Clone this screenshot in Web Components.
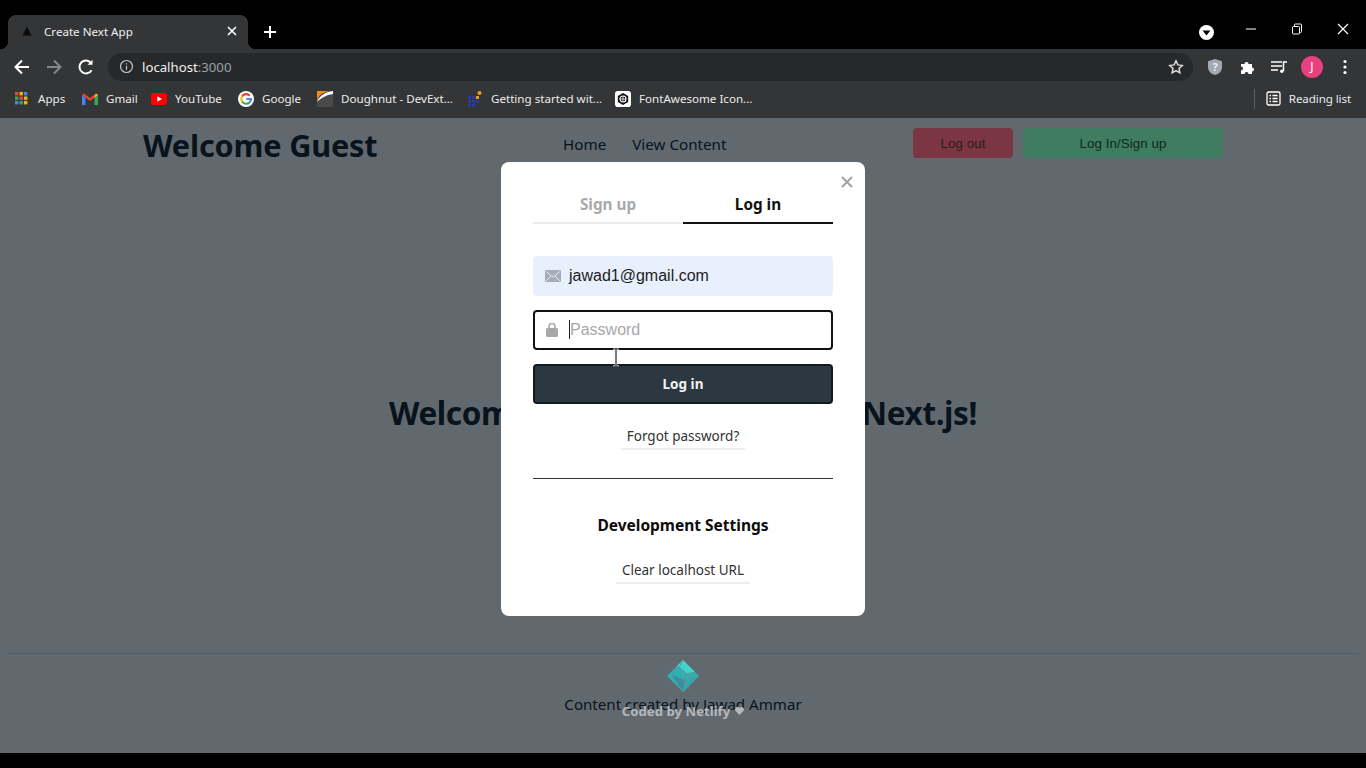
<!DOCTYPE html>
<html lang="en">
<head>
<meta charset="utf-8">
<title>Create Next App</title>
<style>
    html, body { margin: 0; height: 100%; background: #000; overflow: hidden; }
    body { display: flex; flex-direction: column; height: 768px; font-family: "Noto Sans", "Open Sans", sans-serif; }
</style>
</head>
<body>
<browser-frame></browser-frame>
<bookmark-bar></bookmark-bar>
<app-page></app-page>
<login-modal></login-modal>

<template id="frame-template">
    <style>
        :host { display: block; color: #fff; }
        .strip { height: 49px; background: #000; display: flex; align-items: flex-end; padding-left: 8px; box-sizing: border-box; }
        .tab { width: 240px; height: 34px; background: #343536; border-radius: 8px 8px 0 0; display: flex; align-items: center; box-sizing: border-box; padding: 0 10px 2px 13px; position: relative; font-size: 11.6px; }
        .tab::after { content: ""; position: absolute; right: -8px; bottom: 0; width: 8px; height: 8px; background: radial-gradient(circle at 100% 0, transparent 8px, #343536 8.5px); }
        .tab::before { content: ""; position: absolute; left: -8px; bottom: 0; width: 8px; height: 8px; background: radial-gradient(circle at 0 0, transparent 8px, #343536 8.5px); }
        .tab span { flex: 1; padding-left: 11px; color: #f1f1f1; }
        .plus { margin: 0 0 7px 12px; display: block; flex: none; }
        .spacer { flex: 1; }
        .controls { display: flex; align-items: flex-start; height: 49px; }
        .controls svg { display: block; }
        .media { margin: 25px 14px 0 0; }
        .win { width: 46px; display: flex; justify-content: center; margin-top: 23px; }
        .win.close { margin-top: 22px; }
        .toolbar { height: 33px; background: #343536; display: flex; align-items: center; box-sizing: border-box; padding: 2px 0 0 12px; }
        .nav { display: flex; align-items: center; gap: 12px; width: 96px; }
        .omni { width: 1085px; height: 28px; border-radius: 14px; background: #27282a; display: flex; align-items: center; box-sizing: border-box; padding: 0 9px 0 11px; font-size: 13.2px; }
        .url { flex: 1; padding-left: 8px; color: #f1f1f1; }
        .url i { font-style: normal; color: #9aa0a6; }
        .tools { display: flex; align-items: center; width: 173px; }
        .tools > * { flex: none; }
        .avatar { width: 22px; height: 22px; border-radius: 50%; background: #e9407f; font-size: 12px; display: flex; align-items: center; justify-content: center; color: #fff; }
    </style>
    <div class="strip">
        <div class="tab">
            <svg width="12" height="12" viewBox="0 0 12 12"><path d="M6 1.500 10.500 10.500H1.500z" fill="#0c0c0c"/></svg>
            <span>Create Next App</span>
            <svg width="12" height="12" viewBox="0 0 12 12"><path d="M2 2l8 8M10 2l-8 8" stroke="#fff" stroke-width="1.6"/></svg>
        </div>
        <svg class="plus" width="20" height="20" viewBox="0 0 20 20"><path d="M10 4v12M4 10h12" stroke="#fff" stroke-width="2"/></svg>
        <div class="spacer"></div>
        <div class="controls">
            <svg class="media" width="15" height="15" viewBox="0 0 15 15"><circle cx="7.5" cy="7.5" r="7.5" fill="#fff"/><path d="M3.6 5.6h7.8L7.5 10.6z" fill="#000"/></svg>
            <div class="win"><svg width="12" height="12" viewBox="0 0 12 12"><path d="M1 6h10" stroke="#fff" stroke-width="1"/></svg></div>
            <div class="win"><svg width="12" height="12" viewBox="0 0 12 12" fill="none" stroke="#fff"><rect x="1.5" y="3.5" width="7" height="7.5" rx="1"/><path d="M3.5 3.5V2a1 1 0 0 1 1-1h5a1 1 0 0 1 1 1v6.5a1 1 0 0 1-1 1H8.5"/></svg></div>
            <div class="win close"><svg width="14" height="14" viewBox="0 0 14 14"><path d="M2 2l10 10M12 2 2 12" stroke="#fff" stroke-width="1.2"/></svg></div>
        </div>
    </div>
    <div class="toolbar">
        <div class="nav">
            <svg width="20" height="20" viewBox="0 0 20 20" fill="none" stroke="#fff" stroke-width="2"><path d="M17 10H4M10 3.5 3.5 10l6.5 6.5"/></svg>
            <svg width="20" height="20" viewBox="0 0 20 20" fill="none" stroke="#85878a" stroke-width="2"><path d="M3 10h13M10 3.5l6.5 6.5-6.5 6.5"/></svg>
            <svg width="20" height="20" viewBox="0 0 20 20" fill="none" stroke="#fff" stroke-width="2"><path d="M15.6 13.2A6.5 6.5 0 1 1 15.2 6"/><path d="M16.5 2.8v5h-5z" fill="#fff" stroke="none"/></svg>
        </div>
        <div class="omni">
            <svg width="15" height="15" viewBox="0 0 15 15" fill="none" stroke="#c4c6c9" stroke-width="1.2"><circle cx="7.5" cy="7.5" r="6"/><path d="M7.5 6.8v4M7.5 4.2v1.4"/></svg>
            <div class="url">localhost<i>:3000</i></div>
            <svg width="16" height="16" viewBox="0 0 16 16" fill="none" stroke="#e4e4e4" stroke-width="1.4"><path d="M8 1.8l1.9 4.1 4.4.5-3.3 3 .9 4.4L8 11.6l-3.900 2.2.9-4.4-3.300-3 4.400-.5z"/></svg>
        </div>
        <div class="tools">
            <svg style="margin-left:14px" width="16" height="18" viewBox="0 0 16 18"><path d="M8 1l7 2.200v6C15 13 12 16 8 17 4 16 1 13 1 9.200v-6z" fill="#a4a8b2"/><text x="8" y="13" text-anchor="middle" font-size="11" font-weight="700" font-family="Noto Sans" fill="#eee">?</text></svg>
            <svg style="margin-left:17px" width="16" height="16" viewBox="0 0 16 16"><path d="M1 5h3.500a2 2 0 1 1 4 0H12v3.500a2 2 0 1 1 0 4V15H8.500a2 2 0 1 0-4 0H1v-3.500a2 2 0 1 0 0-4z" fill="#fff"/></svg>
            <svg style="margin-left:14px" width="18" height="16" viewBox="0 0 18 16" fill="none" stroke="#fff" stroke-width="1.500"><path d="M1 3h11M1 7h11M1 11h7"/><path d="M13.500 12V3h3.500"/><circle cx="11.800" cy="12.300" r="1.700" fill="#fff" stroke="none"/></svg>
            <div class="avatar" style="margin-left:13px">J</div>
            <svg style="margin-left:20px" width="4" height="16" viewBox="0 0 4 16" fill="#fff"><circle cx="2" cy="2.500" r="1.600"/><circle cx="2" cy="8" r="1.600"/><circle cx="2" cy="13.500" r="1.600"/></svg>
        </div>
    </div>
</template>

<template id="bookmarks-template">
    <style>
        :host { display: flex; align-items: center; height: 36px; background: #343536; color: #ececec; font-size: 11.6px; box-sizing: border-box; padding: 0 15px 3px 14px; }
        .left { display: flex; align-items: center; flex: 1; }
        .reading { display: flex; align-items: center; gap: 8px; border-left: 1px solid #5f6063; height: 20px; padding-left: 11px; letter-spacing: -.1px; }
        svg { display: block; }
    </style>
    <div class="left"><slot></slot></div>
    <div class="reading">
        <svg width="15" height="15" viewBox="0 0 15 15" fill="none" stroke="#fff" stroke-width="1.300"><rect x="1" y="1" width="13" height="13" rx="1.500"/><path d="M3.500 4.500h1.500M6.500 4.500h5M3.500 7.500h1.500M6.500 7.500h5M3.500 10.500h1.500M6.500 10.500h5"/></svg>
        <span>Reading list</span>
    </div>
</template>

<template id="bookmark-template">
    <style>
        :host { display: flex; align-items: center; gap: 8px; white-space: nowrap; }
        ::slotted(svg) { display: block; flex: none; }
    </style>
    <slot name="icon"></slot><span></span>
</template>

<template id="page-template">
    <style>
        :host { display: flex; flex-direction: column; height: 635px; flex: none; background: #61696f; color: #08131b; font-family: "Noto Sans", "Open Sans", sans-serif; }
        header { width: 1080px; margin: 0 auto; display: flex; height: 60px; box-sizing: border-box; padding-top: 9px; align-items: flex-start; }
        h1 { margin: 0; width: 420px; font-size: 30.7px; line-height: 36px; font-weight: 700; letter-spacing: -.2px; }
        nav { display: flex; gap: 26px; width: 350px; font-size: 15.2px; line-height: 32px; padding-top: 1px; }
        .buttons { display: flex; gap: 10px; font-family: "Liberation Sans", sans-serif; font-size: 13.300px; padding-top: 1px; }
        .btn { height: 30px; border-radius: 4px; display: flex; align-items: center; justify-content: center; box-sizing: border-box; padding-top: 1px; letter-spacing: .1px; }
        .out { width: 100px; background: #7b3643; color: #2d1a20; }
        .in { width: 200px; background: #3f7c60; color: #0c2a20; }
        main { flex: 1; display: flex; justify-content: center; align-items: center; padding-bottom: 6px; }
        h2 { margin: 0; width: 588px; display: flex; justify-content: space-between; font-size: 31.5px; line-height: 44px; font-weight: 700; letter-spacing: -.4px; }
        footer { height: 100px; box-sizing: border-box; border-top: 1px solid #565e65; margin: 0 8px; display: flex; flex-direction: column; align-items: center; position: relative; font-size: 15.100px; }
        .logo { margin-top: 6px; display: block; }
        .credit { margin-top: 1px; line-height: 22px; }
        .coded { position: absolute; top: 48px; left: 0; right: 0; display: flex; justify-content: center; align-items: center; gap: 5px; font-size: 13.200px; font-weight: 700; color: #b3b8bb; line-height: 18px; }
    </style>
    <header>
        <h1>Welcome Guest</h1>
        <nav><span>Home</span><span>View Content</span></nav>
        <div class="buttons"><div class="btn out">Log out</div><div class="btn in">Log In/Sign up</div></div>
    </header>
    <main><h2><span>Welcome</span><span>Next.js!</span></h2></main>
    <footer>
        <svg class="logo" width="32" height="32" viewBox="0 0 32 32">
            <path d="M16 0 32 16 16 32 0 16z" fill="#2fb0b3"/>
            <path d="M16 0 28 12 20 14 12 7 10 6z" fill="#43d3cb"/>
            <path d="M5 15 16 32 18 20z" fill="#3e8b9e"/>
            <path d="M16 32 32 16 24 18z" fill="#35a3ac"/>
            <path d="M12 7l8 7-2 6M5 15l13 5 6-2 6-2M12 7 5 15M20 14l8-2M18 20l-2 12M18 20l4 9M12 7l4-7M9 23l9-3M20 14l4 4" stroke="#5f8f99" stroke-width=".8" fill="none"/>
        </svg>
        <div class="credit">Content created by Jawad Ammar</div>
        <div class="coded"><span>Coded by Netlify</span><svg width="9" height="8" viewBox="0 0 9 8"><path d="M4.500 8 .6 4A2.300 2.300 0 0 1 4.500 1a2.300 2.300 0 0 1 3.900 3z" fill="#b3b8bb"/></svg></div>
    </footer>
</template>

<template id="modal-template">
    <style>
        :host { position: absolute; left: 501px; top: 162px; width: 364px; height: 454px; display: block; background: #fff; border-radius: 8px; box-sizing: border-box; padding: 24px 32px 0; color: #111; font-family: "Noto Sans", "Open Sans", sans-serif; }
        .close { position: absolute; right: 11px; top: 13px; }
        .tabs { display: flex; height: 38px; font-size: 15.300px; font-weight: 700; text-align: center; line-height: 36px; }
        .tabs div { flex: 1; box-sizing: border-box; }
        .off { color: #a9a9a9; border-bottom: 2px solid #ececec; }
        .on { color: #111; border-bottom: 2px solid #111; }
        .field { height: 40px; border-radius: 4px; display: flex; align-items: center; box-sizing: border-box; padding-left: 12px; font-family: "Liberation Sans", sans-serif; font-size: 16px; }
        .email { margin-top: 32px; background: #e8f0fe; color: #1c1c1c; }
        .password { margin-top: 14px; border: 2px solid #111; padding: 0 0 2px 11px; color: #a8a8a8; }
        .field svg { flex: none; display: block; }
        .email span { padding-left: 8px; }
        .password .lbl { margin-left: 11px; border-left: 1px solid #222; line-height: 19px; }
        button { display: block; width: 100%; height: 40px; margin-top: 14px; background: #2c383f; color: #f2f2f2; border: 2px solid #141a1e; border-radius: 4px; font: 700 13.500px "Noto Sans", "Open Sans", sans-serif; padding: 0; }
        .link { display: block; width: max-content; margin: 0 auto; font-size: 13.500px; color: #333; line-height: 20px; padding: 0 6px 2px; border-bottom: 2px solid #eeeeee; }
        .forgot { margin-top: 22px; }
        hr { border: 0; height: 1px; background: #333; margin: 28px 0 0; }
        h3 { margin: 35px 0 0; font-size: 15.500px; line-height: 22px; font-weight: 700; text-align: center; color: #0c0c0c; }
        .clear { margin-top: 24px; }
        .cursor { position: absolute; left: 111px; top: 186px; }
    </style>
    <svg class="close" width="14" height="14" viewBox="0 0 14 14"><path d="M2 2l10 10M12 2 2 12" stroke="#a3a3a3" stroke-width="2"/></svg>
    <div class="tabs"><div class="off">Sign up</div><div class="on">Log in</div></div>
    <div class="field email">
        <svg width="16" height="12" viewBox="0 0 16 12"><rect width="16" height="12" rx="1" fill="#a7adb7"/><path d="M1 1.500 8 7l7-5.500M1 11l5-5M15 11l-5-5" stroke="#e8f0fe" stroke-width=".9" fill="none"/></svg>
        <span>jawad1@gmail.com</span>
    </div>
    <div class="field password">
        <svg width="12" height="15" viewBox="0 0 12 15"><path d="M3 7V4.500a3 3 0 0 1 6 0V7" fill="none" stroke="#a8a8a8" stroke-width="1.500"/><rect y="6" width="12" height="9" rx="1.500" fill="#a8a8a8"/></svg>
        <span class="lbl">Password</span>
    </div>
    <button>Log in</button>
    <a class="link forgot">Forgot password?</a>
    <hr>
    <h3>Development Settings</h3>
    <a class="link clear">Clear localhost URL</a>
    <svg class="cursor" width="8" height="19" viewBox="0 0 8 19" fill="none"><path d="M1 .8h6M1 18.200h6M4 1v17" stroke="#d9d9d9" stroke-width="2.400"/><path d="M1 .8h6M1 18.200h6M4 1v17" stroke="#222" stroke-width="1"/></svg>
</template>

<script>
function shadowFrom(el, id) {
    const root = el.attachShadow({ mode: 'open' });
    root.appendChild(document.getElementById(id).content.cloneNode(true));
    return root;
}

customElements.define('browser-frame', class BrowserFrame extends HTMLElement {
    constructor() {
        super();
        shadowFrom(this, 'frame-template');
    }
});

customElements.define('bookmark-item', class BookmarkItem extends HTMLElement {
    static get observedAttributes() { return ['label']; }
    constructor() {
        super();
        shadowFrom(this, 'bookmark-template');
    }
    attributeChangedCallback(attr, oldValue, newValue) {
        this.shadowRoot.querySelector('span').textContent = newValue;
    }
});

const appsIcon = ['#e8453c', '#f4b400', '#4285f4', '#34a853', '#e8453c', '#f4b400', '#4285f4', '#34a853', '#f4b400']
    .map((c, i) => `<rect x="${1 + (i % 3) * 4.5}" y="${1 + Math.floor(i / 3) * 4.5}" width="3.400" height="3.400" fill="${c}"/>`).join('');

const bookmarks = [
    { label: 'Apps', width: 68, icon: `<svg slot="icon" width="16" height="16" viewBox="0 0 16 16">${appsIcon}</svg>` },
    { label: 'Gmail', width: 69, icon: `<svg slot="icon" width="16" height="12" viewBox="0 0 16 12"><path d="M0 2v10h3.500V5z" fill="#4285f4"/><path d="M16 2v10h-3.500V5z" fill="#34a853"/><path d="M0 2 2 .5 8 5l6-4.500L16 2 8 8z" fill="#ea4335"/><path d="M12.500 2.800 14 .5 16 2l-3.500 3z" fill="#fbbc04"/></svg>` },
    { label: 'YouTube', width: 87, icon: `<svg slot="icon" width="16" height="12" viewBox="0 0 16 12"><rect width="16" height="12" rx="3" fill="#f00"/><path d="M6.300 3.200v5.600L11 6z" fill="#fff"/></svg>` },
    { label: 'Google', width: 79, icon: `<svg slot="icon" width="16" height="16" viewBox="0 0 16 16"><circle cx="8" cy="8" r="8" fill="#fff"/><g fill="none" stroke-width="2.200"><path d="M11.800 4.700A5 5 0 0 0 4 5.500" stroke="#ea4335"/><path d="M4 5.500a5 5 0 0 0 0 5" stroke="#fbbc04"/><path d="M4 10.500a5 5 0 0 0 7.500 1" stroke="#34a853"/><path d="M11.500 11.500A5 5 0 0 0 13 8H8.200" stroke="#4285f4"/></g></svg>` },
    { label: 'Doughnut - DevExt...', width: 150, icon: `<svg slot="icon" width="16" height="16" viewBox="0 0 16 16"><rect width="16" height="16" fill="#4a4a4a"/><path d="M0 11C2 5 8 1 16 0v3C9 4 4 7 0 11z" fill="#fff"/><path d="M0 9C2 4 6 1 12 0H0z" fill="#f08a1d"/></svg>` },
    { label: 'Getting started wit...', width: 148, icon: `<svg slot="icon" width="16" height="16" viewBox="0 0 16 16"><g fill="#2b3a9e"><rect x="1" y="5" width="3" height="3"/><rect x="5" y="5" width="3" height="3"/><rect x="1" y="9" width="3" height="3"/><rect x="5" y="9" width="3" height="3"/><rect x="5" y="13" width="3" height="3"/><rect x="1" y="13" width="3" height="3"/></g><rect x="9" y="5" width="3" height="3" fill="#f29a1f"/><rect x="9" y="9" width="3" height="3" fill="#2b3a9e"/><circle cx="12.500" cy="2" r="2" fill="#f29a1f"/></svg>` },
    { label: 'FontAwesome Icon...', width: 140, icon: `<svg slot="icon" width="16" height="16" viewBox="0 0 17 17"><rect width="17" height="17" rx="3" fill="#fff"/><path d="M8.500 2 14 5.200v6.600L8.500 15 3 11.800V5.200z" fill="#111"/><circle cx="8.500" cy="8.500" r="3.200" fill="none" stroke="#fff" stroke-width="1.200"/><path d="M8.500 5.300v6.400M5.300 8.500h6.400" stroke="#fff" stroke-width=".8"/></svg>` }
];

customElements.define('bookmark-bar', class BookmarkBar extends HTMLElement {
    constructor() {
        super();
        shadowFrom(this, 'bookmarks-template');
        bookmarks.forEach(item => {
            const el = document.createElement('bookmark-item');
            el.setAttribute('label', item.label);
            el.style.width = item.width + 'px';
            el.innerHTML = item.icon;
            this.appendChild(el);
        });
    }
});

customElements.define('app-page', class AppPage extends HTMLElement {
    constructor() {
        super();
        shadowFrom(this, 'page-template');
    }
});

customElements.define('login-modal', class LoginModal extends HTMLElement {
    constructor() {
        super();
        shadowFrom(this, 'modal-template');
    }
});
</script>
</body>
</html>
